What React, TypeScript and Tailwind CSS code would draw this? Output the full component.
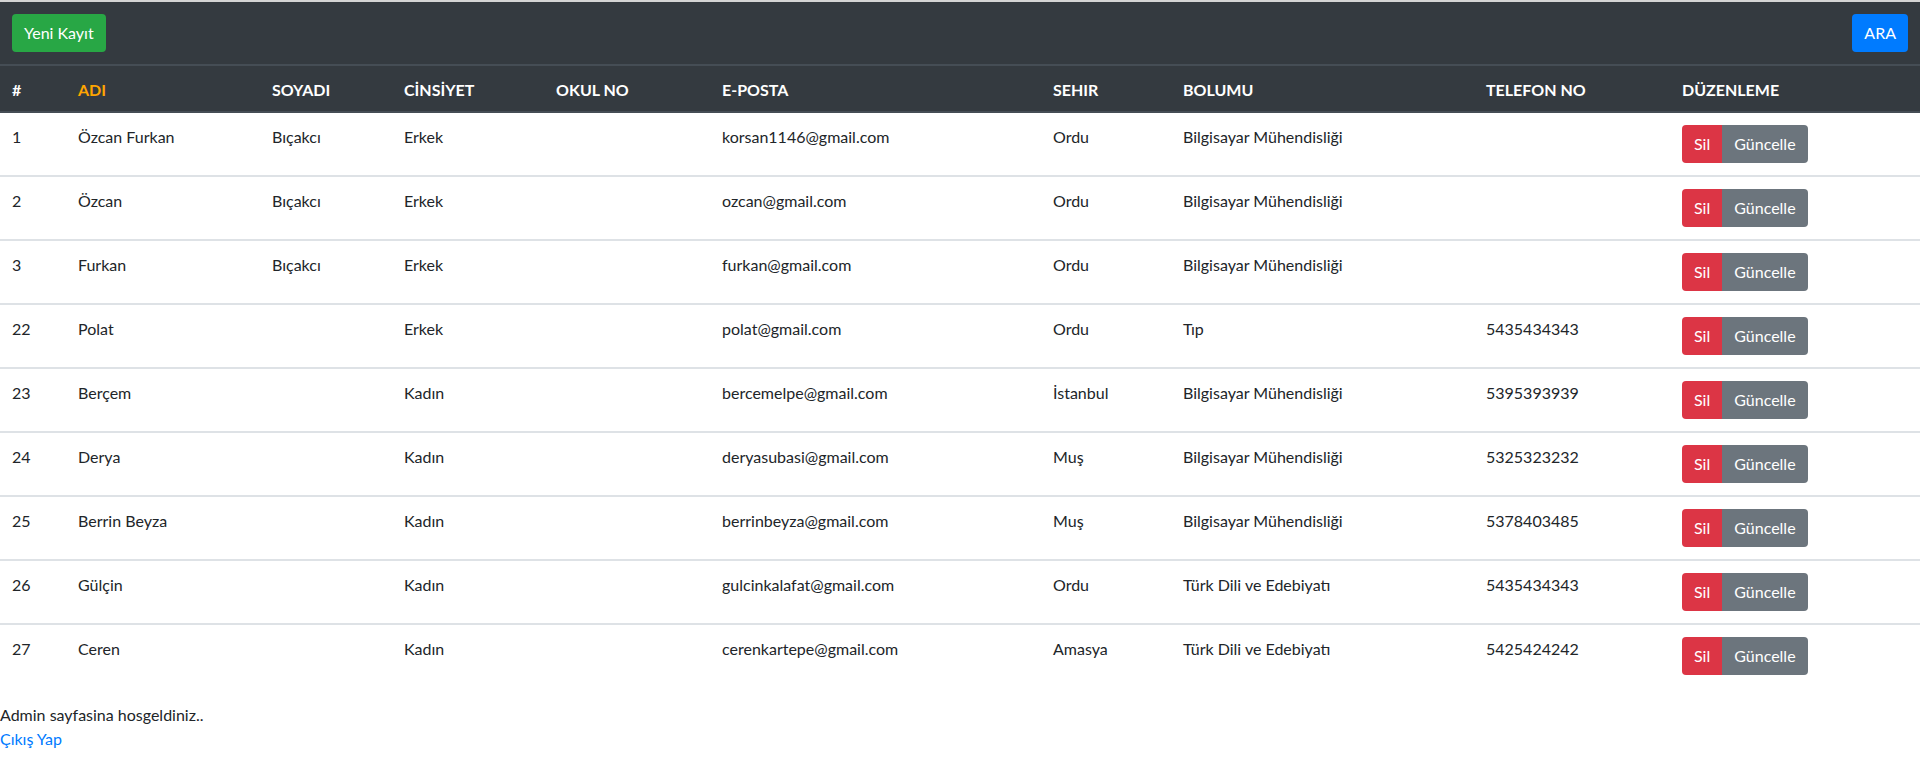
import React from 'react';

type Student = {
  id: number;
  ad: string;
  soyad: string;
  cinsiyet: string;
  okulNo: string;
  eposta: string;
  sehir: string;
  bolum: string;
  telefon: string;
};

const students: Student[] = [
  { id: 1, ad: 'Özcan Furkan', soyad: 'Bıçakcı', cinsiyet: 'Erkek', okulNo: '', eposta: 'korsan1146@gmail.com', sehir: 'Ordu', bolum: 'Bilgisayar Mühendisliği', telefon: '' },
  { id: 2, ad: 'Özcan', soyad: 'Bıçakcı', cinsiyet: 'Erkek', okulNo: '', eposta: 'ozcan@gmail.com', sehir: 'Ordu', bolum: 'Bilgisayar Mühendisliği', telefon: '' },
  { id: 3, ad: 'Furkan', soyad: 'Bıçakcı', cinsiyet: 'Erkek', okulNo: '', eposta: 'furkan@gmail.com', sehir: 'Ordu', bolum: 'Bilgisayar Mühendisliği', telefon: '' },
  { id: 22, ad: 'Polat', soyad: '', cinsiyet: 'Erkek', okulNo: '', eposta: 'polat@gmail.com', sehir: 'Ordu', bolum: 'Tıp', telefon: '5435434343' },
  { id: 23, ad: 'Berçem', soyad: '', cinsiyet: 'Kadın', okulNo: '', eposta: 'bercemelpe@gmail.com', sehir: 'İstanbul', bolum: 'Bilgisayar Mühendisliği', telefon: '5395393939' },
  { id: 24, ad: 'Derya', soyad: '', cinsiyet: 'Kadın', okulNo: '', eposta: 'deryasubasi@gmail.com', sehir: 'Muş', bolum: 'Bilgisayar Mühendisliği', telefon: '5325323232' },
  { id: 25, ad: 'Berrin Beyza', soyad: '', cinsiyet: 'Kadın', okulNo: '', eposta: 'berrinbeyza@gmail.com', sehir: 'Muş', bolum: 'Bilgisayar Mühendisliği', telefon: '5378403485' },
  { id: 26, ad: 'Gülçin', soyad: '', cinsiyet: 'Kadın', okulNo: '', eposta: 'gulcinkalafat@gmail.com', sehir: 'Ordu', bolum: 'Türk Dili ve Edebiyatı', telefon: '5435434343' },
  { id: 27, ad: 'Ceren', soyad: '', cinsiyet: 'Kadın', okulNo: '', eposta: 'cerenkartepe@gmail.com', sehir: 'Amasya', bolum: 'Türk Dili ve Edebiyatı', telefon: '5425424242' },
];

const headers = [
  { label: '#', w: 'w-[66px]' },
  { label: 'ADI', w: 'w-[194px]', accent: true },
  { label: 'SOYADI', w: 'w-[132px]' },
  { label: 'CİNSİYET', w: 'w-[152px]' },
  { label: 'OKUL NO', w: 'w-[166px]' },
  { label: 'E-POSTA', w: 'w-[331px]' },
  { label: 'SEHIR', w: 'w-[130px]' },
  { label: 'BOLUMU', w: 'w-[303px]' },
  { label: 'TELEFON NO', w: 'w-[196px]' },
  { label: 'DÜZENLEME', w: 'w-[250px]' },
];

export default function App() {
  return (
    <div className="min-h-screen bg-white text-[16px] leading-6 text-[#212529] font-['Segoe_UI','Lato',sans-serif]">
      {/* Top bar */}
      <nav className="flex items-center justify-between border-t-2 border-b-2 border-t-[#d4d4d4] border-b-[#454d55] bg-[#343a40] px-3 py-3">
        <button className="h-[38px] rounded bg-[#28a745] px-3 text-white">Yeni Kayıt</button>
        <button className="h-[38px] rounded bg-[#007bff] px-3 text-white">ARA</button>
      </nav>

      {/* Table */}
      <table className="mb-4 w-full table-fixed border-collapse text-left">
        <thead className="bg-[#343a40]">
          <tr>
            {headers.map((h) => (
              <th
                key={h.label}
                className={`${h.w} border-b-2 border-[#454d55] px-3 pt-3 pb-[9px] align-bottom font-bold ${
                  h.accent ? 'text-[#ffa500]' : 'text-white'
                }`}
              >
                {h.label}
              </th>
            ))}
          </tr>
        </thead>
        <tbody>
          {students.map((s, i) => (
            <tr key={s.id} className={i === 0 ? '' : 'border-t-2 border-[#dee2e6]'}>
              <td className="p-3 align-top">{s.id}</td>
              <td className="p-3 align-top">{s.ad}</td>
              <td className="p-3 align-top">{s.soyad}</td>
              <td className="p-3 align-top">{s.cinsiyet}</td>
              <td className="p-3 align-top">{s.okulNo}</td>
              <td className="p-3 align-top">{s.eposta}</td>
              <td className="p-3 align-top">{s.sehir}</td>
              <td className="p-3 align-top">{s.bolum}</td>
              <td className="p-3 align-top">{s.telefon}</td>
              <td className="p-3 align-top">
                <div className="inline-flex">
                  <button className="h-[38px] rounded-l bg-[#dc3545] px-3 text-white">Sil</button>
                  <button className="h-[38px] rounded-r bg-[#6c757d] px-3 text-white">Güncelle</button>
                </div>
              </td>
            </tr>
          ))}
        </tbody>
      </table>

      {/* Footer */}
      <div>Admin sayfasina hosgeldiniz..</div>
      <a href="#" className="text-[#007bff]">Çıkış Yap</a>
    </div>
  );
}
